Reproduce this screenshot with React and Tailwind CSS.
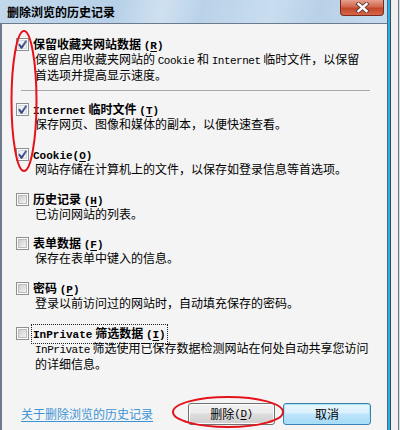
import React from 'react'

const cjk = "font-['Noto_Sans_CJK_SC','Noto_Sans_CJK_JP',sans-serif]"

function L({ children, bold }) {
  return (
    <span
      className={`font-['Liberation_Mono','Noto_Sans_CJK_SC',monospace] text-[11px] ${
        bold ? 'tracking-[0px]' : 'tracking-[-0.5px]'
      }`}
    >
      {children}
    </span>
  )
}

function Key({ k, bold = true }) {
  return (
    <L bold={bold}>
      (<span className="underline underline-offset-2">{k}</span>)
    </L>
  )
}

function Box({ checked }) {
  return (
    <svg width="13" height="13" viewBox="0 0 13 13" className="shrink-0">
      <defs>
        <linearGradient id="cbg" x1="0" y1="0" x2="1" y2="1">
          <stop offset="0" stopColor="#cbcbcb" />
          <stop offset="1" stopColor="#f6f6f6" />
        </linearGradient>
        <linearGradient id="chk" x1="0" y1="0" x2="0" y2="1">
          <stop offset="0" stopColor="#5a6fb0" />
          <stop offset="1" stopColor="#2f3f7a" />
        </linearGradient>
      </defs>
      <rect x="0.5" y="0.5" width="12" height="12" fill="#fdfdfd" stroke="#8e8f8f" />
      <rect x="2.5" y="2.5" width="8" height="8" fill={checked ? '#eef0f4' : 'url(#cbg)'} stroke={checked ? '#d4d7de' : '#bdbdbd'} />
      {checked && (
        <path d="M3 6.2 L5.6 9.8 L10.4 2.6" fill="none" stroke="url(#chk)" strokeWidth="2" strokeLinejoin="round" />
      )}
    </svg>
  )
}

function Item({ checked, label, desc, focus, className = '' }) {
  return (
    <div className={className}>
      <div className="flex items-center h-[13px]">
        <Box checked={checked} />
        <span className={`ml-[4px] font-bold leading-[13px] whitespace-nowrap ${focus ? 'outline outline-1 outline-dotted outline-[#222] outline-offset-[1px]' : ''}`}>
          {label}
        </span>
      </div>
      <div className="pl-[19px] mt-[1px] leading-[13px] whitespace-nowrap">{desc}</div>
    </div>
  )
}

function Button({ children, focused, className = '' }) {
  return (
    <div
      className={`h-[22px] rounded-[3px] border flex items-center justify-center text-[12px] ${
        focused
          ? 'border-[#3c7fb1] shadow-[inset_0_0_0_1px_#a6e2f8] bg-[linear-gradient(#eaf6fd_0%,#d9f0fc_45%,#bee6fd_50%,#a7d9f5_100%)]'
          : 'border-[#707070] shadow-[inset_0_0_0_1px_#fcfcfc] bg-[linear-gradient(#f2f2f2_0%,#ebebeb_45%,#dddddd_50%,#cfcfcf_100%)]'
      } ${className}`}
    >
      {children}
    </div>
  )
}

export default function App() {
  return (
    <div className={`relative w-[400px] h-[430px] flex overflow-hidden bg-[#eef0f2] text-[12px] text-black ${cjk}`}>
      <div className="w-[387px] flex flex-col">
        {/* title bar */}
        <div className="relative h-[23px] shrink-0 bg-[linear-gradient(105deg,#c2d8ec_0%,#b7d0e7_30%,#cfe1f1_42%,#bad2e8_52%,#c8ddef_70%,#b9d1e7_82%,#c6dbee_100%)]">
          <span className="absolute left-[7px] top-[5px] font-bold leading-[14px]">删除浏览的历史记录</span>
          <div className="absolute left-[340px] top-0 w-[44px] h-[16px] rounded-b-[4px] border border-t-0 border-[#7a2a1e] bg-[linear-gradient(#e5a08f_0%,#d2674d_45%,#c2452a_55%,#d8664a_100%)] flex items-center justify-center">
            <svg width="15" height="11" viewBox="0 0 15 11">
              <path d="M3.5 2 L11.5 9 M11.5 2 L3.5 9" stroke="#5b3a34" strokeWidth="4.2" strokeLinecap="square" />
              <path d="M3.5 2 L11.5 9 M11.5 2 L3.5 9" stroke="#ffffff" strokeWidth="2.4" strokeLinecap="square" />
            </svg>
          </div>
        </div>

        {/* client area */}
        <div className="flex-1 flex flex-col bg-[#f4f4f4] border-l-2 border-t border-[#6b7b8b] pl-[14px] pt-[14px]">
          <Item
            checked
            label={<>保留收藏夹网站数据 <Key k="R" /></>}
            desc={
              <>
                保留启用收藏夹网站的 <L>Cookie</L> 和 <L>Internet</L> 临时文件，以保留
                <br />
                首选项并提高显示速度。
              </>
            }
          />
          <div className="ml-[5px] mt-[9px] w-[349px] h-px bg-[#a8a8a8]" />
          <Item
            checked
            className="mt-[12px]"
            label={<><L bold>Internet</L> 临时文件 <Key k="T" /></>}
            desc="保存网页、图像和媒体的副本，以便快速查看。"
          />
          <Item
            checked
            className="mt-[18px]"
            label={<><L bold>Cookie</L><Key k="O" /></>}
            desc="网站存储在计算机上的文件，以保存如登录信息等首选项。"
          />
          <Item className="mt-[18px]" label={<>历史记录 <Key k="H" /></>} desc="已访问网站的列表。" />
          <Item className="mt-[17px]" label={<>表单数据 <Key k="F" /></>} desc="保存在表单中键入的信息。" />
          <Item className="mt-[18px]" label={<>密码 <Key k="P" /></>} desc="登录以前访问过的网站时，自动填充保存的密码。" />
          <Item
            focus
            className="mt-[18px]"
            label={<><L bold>InPrivate</L> 筛选数据 <Key k="I" /></>}
            desc={
              <>
                <L>InPrivate</L> 筛选使用已保存数据检测网站在何处自动共享您访问
                <br />
                的详细信息。
              </>
            }
          />

          <div className="mt-[33px] flex items-center pr-[16px]">
            <span className="ml-[5px] text-[#3b93d3] underline underline-offset-2">关于删除浏览的历史记录</span>
            <Button className="ml-auto w-[87px]">
              删除 <Key k="D" bold={false} />
            </Button>
            <Button focused className="ml-[8px] w-[88px]">
              取消
            </Button>
          </div>
        </div>
      </div>

      {/* right frame strips */}
      <div className="w-px h-full bg-[#56667a]" />
      <div className="w-[2px] h-full bg-[#1fb4e8]" />
      <div className="w-px h-full bg-[#3a4a5a]" />
      <div className="w-[7px] h-full bg-[#f0f0f0]" />
      <div className="w-px h-full bg-[#6a7a8a]" />
      <div className="w-px h-full bg-[#d8dde2]" />

      {/* red annotation marks */}
      <svg className="absolute inset-0 pointer-events-none" width="400" height="430">
        <ellipse cx="24" cy="101" rx="12.5" ry="70" fill="none" stroke="#e5121c" strokeWidth="2" />
        <ellipse cx="228" cy="412" rx="55" ry="15" fill="none" stroke="#e5121c" strokeWidth="2" />
      </svg>
    </div>
  )
}
